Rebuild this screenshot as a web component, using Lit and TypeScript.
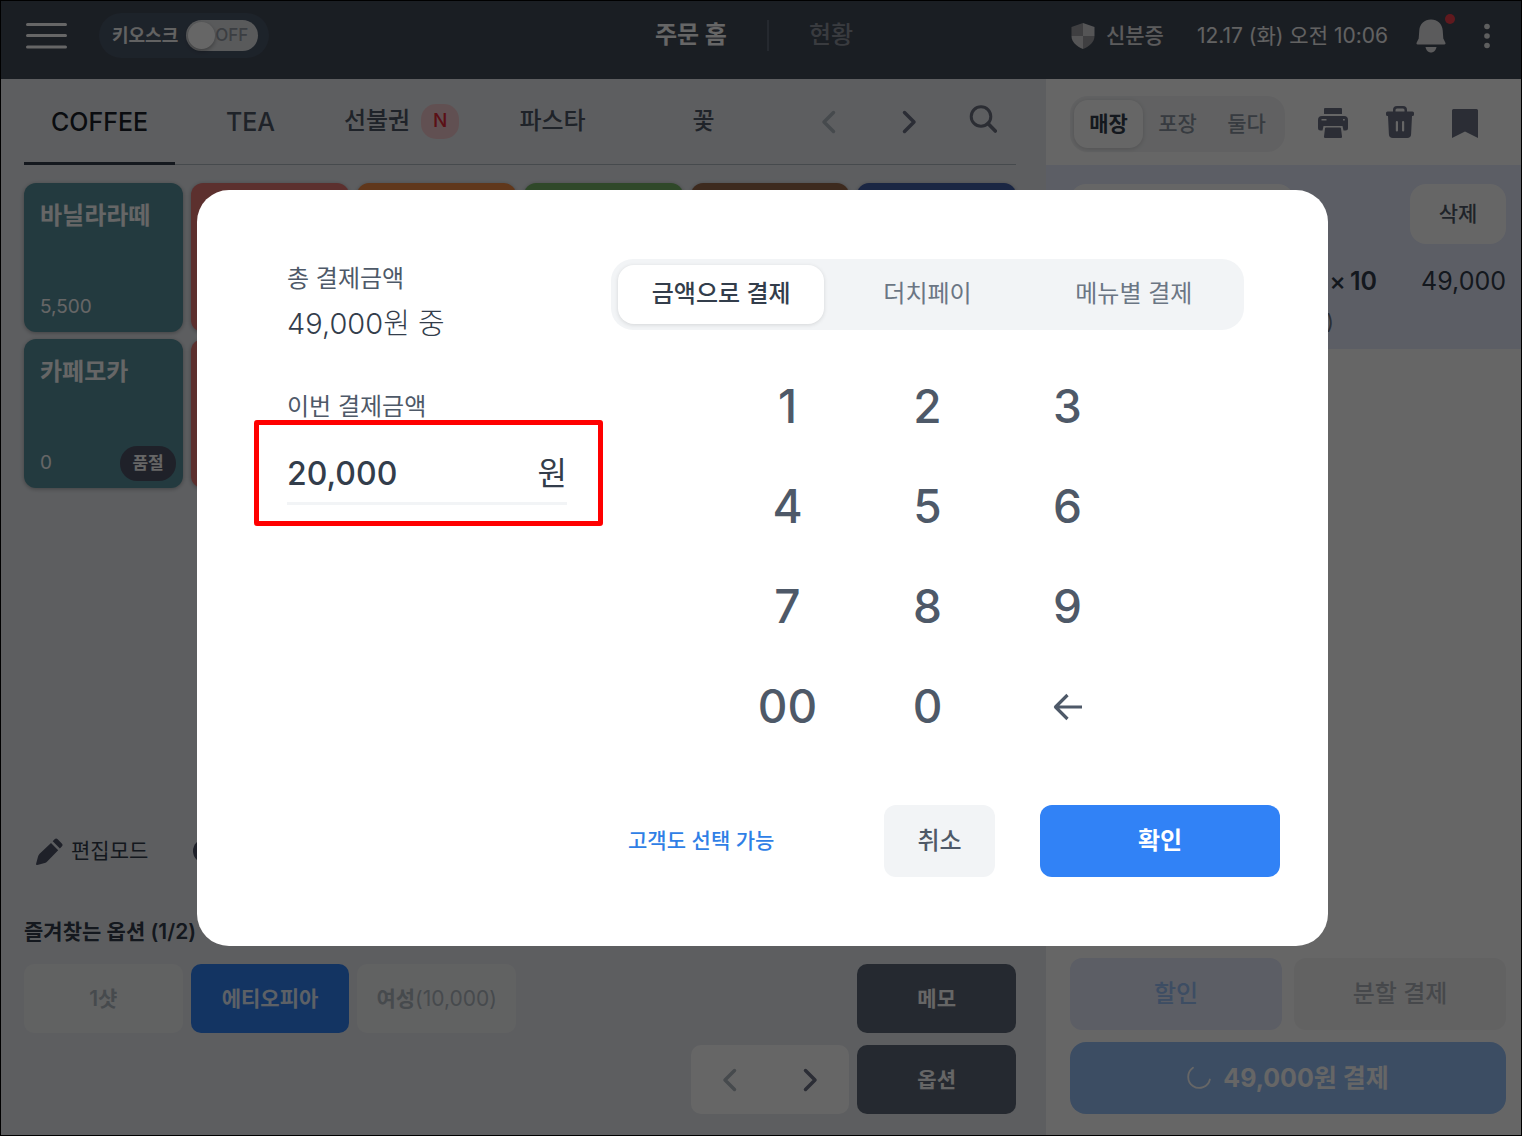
import { LitElement, html, css, svg } from "lit";
import { customElement, state } from "lit/decorators.js";
import { classMap } from "lit/directives/class-map.js";

const chevron = (dir: "left" | "right") => html`
  <svg class="chevron" viewBox="0 0 24 24" width="24" height="24" aria-hidden="true">
    ${dir === "left"
      ? svg`<path d="M16.5 2.5 7 12l9.5 9.5" />`
      : svg`<path d="M7.5 2.5 17 12l-9.5 9.5" />`}
  </svg>
`;

const menuIcon = html`
  <svg viewBox="0 0 41 28" width="41" height="28" aria-hidden="true">
    <path d="M1.5 2.5h38M1.5 13.5h38M1.5 25h38" stroke="#fff" stroke-width="3" stroke-linecap="round" />
  </svg>
`;

const shieldIcon = html`
  <svg viewBox="0 0 24 26" width="24" height="26" aria-hidden="true">
    <path d="M12 0 .5 4v9H12z" fill="#9d9fa4" />
    <path d="M12 0l11.5 4v9H12z" fill="#d4d5d8" />
    <path d="M.5 13H12v13C5.500 23.5.5 19 .5 13z" fill="#d4d5d8" />
    <path d="M23.5 13H12v13c6.500-2.500 11.500-7 11.500-13z" fill="#9d9fa4" />
  </svg>
`;

const bellIcon = html`
  <svg viewBox="0 0 30 34" width="30" height="34" aria-hidden="true">
    <path
      d="M15 .5C8.500 .5 3.800 5 3.300 11.300L2.700 19.500 .6 23.800c-.4 .9 .1 1.700 1 1.700h26.800c.9 0 1.400-.8 1-1.700l-2.100-4.300-.6-8.200C26.200 5 21.500 .5 15 .5z"
      fill="#e3e4e6"
    />
    <path d="M9.500 28h11c-.6 3.300-2.800 5.500-5.500 5.500S10.100 31.300 9.500 28z" fill="#e3e4e6" />
  </svg>
`;

const kebabIcon = html`
  <svg viewBox="0 0 6 26" width="6" height="26" aria-hidden="true">
    <g fill="#eceded"><circle cx="3" cy="3.5" r="2.8" /><circle cx="3" cy="13" r="2.8" /><circle cx="3" cy="22.5" r="2.8" /></g>
  </svg>
`;

const searchIcon = html`
  <svg viewBox="0 0 28 28" width="28" height="28" aria-hidden="true" fill="none" stroke="#6b7080" stroke-width="3">
    <circle cx="12" cy="11.5" r="9.8" />
    <path d="M19 18.500l7.300 7.500" stroke-width="3.600" stroke-linecap="round" />
  </svg>
`;

const printerIcon = html`
  <svg viewBox="0 0 30 30" width="30" height="30" aria-hidden="true" fill="#6b7084">
    <path d="M7 0h16a1 1 0 0 1 1 1v5H6V1a1 1 0 0 1 1-1z" />
    <path
      fill-rule="evenodd"
      d="M4 8h22a4 4 0 0 1 4 4v8a2.500 2.500 0 0 1-2.500 2.500H25.500L24.500 18H5.500L4.500 22.500H2.500A2.500 2.500 0 0 1 0 20v-8a4 4 0 0 1 4-4zM3.500 11v1.600h5V11zM25 11v1.600h1.800V11z"
    />
    <path d="M8 19.500h14a1 1 0 0 1 1 .9l1 8.100a1.300 1.300 0 0 1-1.300 1.500H7.300A1.300 1.300 0 0 1 6 28.500l1-8.100a1 1 0 0 1 1-.9z" />
  </svg>
`;

const trashIcon = html`
  <svg viewBox="0 0 28 32" width="28" height="32" aria-hidden="true" fill="#6b7084">
    <path
      fill-rule="evenodd"
      d="M11 0h6a4 4 0 0 1 4 4v1.500h5.500A1.500 1.500 0 0 1 28 7v1.500a1.500 1.500 0 0 1-1.500 1.500H26l-.9 18.200a4 4 0 0 1-4 3.800H6.900a4 4 0 0 1-4-3.800L2 10h-.5A1.500 1.500 0 0 1 0 8.500V7a1.500 1.500 0 0 1 1.500-1.500H7V4a4 4 0 0 1 4-4zM11 2.500A1.500 1.500 0 0 0 9.500 4v1.500h9V4A1.500 1.500 0 0 0 17 2.500zM9.800 16v8.500a1.100 1.100 0 0 0 2.200 0V16a1.100 1.100 0 0 0-2.200 0zM16 16v8.500a1.100 1.100 0 0 0 2.200 0V16a1.100 1.100 0 0 0-2.200 0z"
    />
  </svg>
`;

const bookmarkIcon = html`
  <svg viewBox="0 0 26 29" width="26" height="29" aria-hidden="true">
    <path d="M1.500 0h23A1.500 1.500 0 0 1 26 1.500V29l-13-6.500L0 29V1.500A1.500 1.500 0 0 1 1.500 0z" fill="#6b7084" />
  </svg>
`;

const pencilIcon = html`
  <svg viewBox="0 0 27 27" width="27" height="27" aria-hidden="true" fill="#4e5468">
    <path d="M18.600 1.200a2.200 2.200 0 0 1 3.100 0l4.100 4.200a2.200 2.200 0 0 1 0 3.100l-1.900 2-7.200-7.300z" />
    <path d="M15 5l7.200 7.300L11.200 23.400a6 6 0 0 1-2.400 1.500L1.300 26.900a1 1 0 0 1-1.200-1.200l2-7.500a6 6 0 0 1 1.500-2.500z" />
  </svg>
`;

const spinnerIcon = html`
  <svg viewBox="0 0 24 24" width="24" height="24" aria-hidden="true">
    <path d="M6 1.800A11 11 0 1 0 22.900 13.500" fill="none" stroke="#fff" stroke-width="1.800" stroke-linecap="round" />
  </svg>
`;

const backIcon = html`
  <svg viewBox="0 0 30 28" width="30" height="28" aria-hidden="true">
    <path d="M29 14H3M14.500 2 2.500 14l12 12" fill="none" stroke="#4e5968" stroke-width="3.200" stroke-linejoin="round" />
  </svg>
`;

interface Product {
  tone: string;
  name?: string;
  price?: string;
  soldOut?: boolean;
}

const PRODUCTS: Product[] = [
  { tone: "teal", name: "바닐라라떼", price: "5,500" },
  { tone: "red" },
  { tone: "orange" },
  { tone: "green" },
  { tone: "brown" },
  { tone: "blue" },
  { tone: "teal", name: "카페모카", price: "0", soldOut: true },
  { tone: "red" },
];

const base = css`
  :host {
    display: block;
    font-family: Inter, "Noto Sans CJK KR", sans-serif;
    line-height: 1.2;
  }
  * {
    box-sizing: border-box;
  }
  button,
  input {
    font: inherit;
    color: inherit;
    border: 0;
    padding: 0;
    margin: 0;
    background: none;
  }
  svg {
    display: block;
    flex: none;
  }
  h2,
  p {
    margin: 0;
    font-weight: inherit;
  }
`;

@customElement("top-bar")
class TopBar extends LitElement {
  static styles = [
    base,
    css`
      .bar {
        display: grid;
        grid-template-columns: 1fr auto 1fr;
        align-items: center;
        height: 78px;
        padding: 0 31px 9px 25px;
        background: #434b58;
        color: #f4f4f5;
      }
      .side {
        display: flex;
        align-items: center;
      }
      .end {
        justify-content: flex-end;
      }
      .kiosk {
        display: flex;
        align-items: center;
        gap: 8px;
        height: 45px;
        margin-left: 32px;
        padding: 0 11px 0 13px;
        border-radius: 24px;
        background: #4a5769;
        font-size: 18px;
        font-weight: 700;
      }
      .track {
        position: relative;
        display: flex;
        align-items: center;
        justify-content: flex-end;
        width: 72px;
        height: 31px;
        padding-right: 10px;
        color: #959ba5;
        font-size: 17px;
        font-weight: 500;
      }
      .track input {
        position: absolute;
        inset: 0;
        appearance: none;
        border-radius: 16px;
        background: #dfe1e4;
      }
      .track input::before {
        content: "";
        display: block;
        width: 27px;
        height: 27px;
        margin: 2px;
        border-radius: 50%;
        background: #fff;
        box-shadow: 0 2px 4px rgba(0, 0, 0, 0.3);
      }
      .off {
        position: relative;
        pointer-events: none;
      }
      nav {
        display: flex;
        align-items: center;
        gap: 40px;
        margin-right: 8px;
        font-size: 24px;
      }
      nav a {
        color: #8f959f;
        text-decoration: none;
        font-weight: 500;
      }
      nav a.current {
        color: #fff;
        font-weight: 700;
      }
      .divider {
        width: 2px;
        height: 31px;
        background: #5d6675;
      }
      .id-check {
        display: flex;
        align-items: center;
        gap: 11px;
        color: #e3e4e6;
        font-size: 21px;
        font-weight: 500;
      }
      time {
        margin-left: 33px;
        font-size: 21px;
      }
      .bell {
        position: relative;
        margin-left: 28px;
      }
      .dot {
        position: absolute;
        top: -5px;
        right: -9px;
        width: 10px;
        height: 10px;
        border-radius: 50%;
        background: #f0404b;
      }
      .more {
        margin-left: 38px;
      }
    `,
  ];

  render() {
    return html`
      <header class="bar">
        <div class="side">
          <button aria-label="메뉴">${menuIcon}</button>
          <label class="kiosk">
            <span>키오스크</span>
            <span class="track">
              <input type="checkbox" role="switch" />
              <span class="off">OFF</span>
            </span>
          </label>
        </div>
        <nav>
          <a class="current" href="#home">주문 홈</a>
          <span class="divider"></span>
          <a href="#status">현황</a>
        </nav>
        <div class="side end">
          <button class="id-check">${shieldIcon}<span>신분증</span></button>
          <time>12.17 (화) 오전 10:06</time>
          <button class="bell" aria-label="알림">${bellIcon}<span class="dot"></span></button>
          <button class="more" aria-label="더보기">${kebabIcon}</button>
        </div>
      </header>
    `;
  }
}

@customElement("menu-board")
class MenuBoard extends LitElement {
  static styles = [
    base,
    css`
      :host {
        display: flex;
        flex-direction: column;
        padding: 0 30px 21px 23px;
        background: #e8ebf0;
      }
      .categories {
        display: flex;
        height: 86px;
        border-bottom: 1px solid #b0b8c1;
        font-size: 24px;
        font-weight: 500;
        color: #4e5968;
      }
      .tabs {
        flex: 1;
        display: grid;
        grid-template-columns: repeat(5, 1fr);
        margin-right: 10px;
      }
      .tab {
        display: flex;
        align-items: center;
        justify-content: center;
        gap: 11px;
        padding-top: 2px;
        margin-bottom: -1px;
        border-bottom: 3px solid transparent;
      }
      .tab.latin {
        font-size: 25px;
      }
      .tab.current {
        color: #191f28;
        border-color: #333d4b;
      }
      .new {
        display: grid;
        place-items: center;
        width: 38px;
        height: 35px;
        border-radius: 15px;
        background: #f3c9cd;
        color: #e42939;
        font-size: 19px;
      }
      .tool {
        display: grid;
        place-items: center;
        width: 80px;
      }
      .search {
        width: 67px;
        padding-bottom: 5px;
      }
      .chevron {
        fill: none;
        stroke: #6b7084;
        stroke-width: 3.5;
        stroke-linecap: round;
        stroke-linejoin: round;
      }
      .dim .chevron {
        stroke: #b0b8c1;
      }
      .products {
        display: grid;
        grid-template-columns: repeat(6, 1fr);
        grid-auto-rows: 149px;
        gap: 7px 8px;
        margin-top: 18px;
      }
      .product {
        display: flex;
        flex-direction: column;
        justify-content: space-between;
        padding: 15px 7px 7px 16px;
        border-radius: 12px;
        color: #fff;
        text-align: left;
        box-shadow: 0 1px 4px rgba(0, 0, 0, 0.3);
      }
      .teal { background: #57929f; }
      .red { background: #e67874; }
      .orange { background: #f08a45; }
      .green { background: #76b468; }
      .brown { background: #9a6a4c; }
      .blue { background: #425fa8; }
      .name {
        font-size: 24px;
        line-height: 36px;
        font-weight: 700;
      }
      .foot {
        display: flex;
        align-items: center;
        justify-content: space-between;
        height: 35px;
        font-size: 19px;
      }
      .sold-out {
        padding: 0 12px;
        border-radius: 17px;
        background: #4e5468;
        font-size: 17px;
        line-height: 35px;
        font-weight: 700;
      }
      .actions {
        display: flex;
        align-items: center;
        gap: 45px;
        height: 32px;
        margin-top: auto;
        padding-left: 12px;
        color: #333d4b;
        font-size: 21px;
      }
      .action {
        display: flex;
        align-items: center;
        gap: 8px;
      }
      h2 {
        margin: 49px 0 16px;
        font-size: 21px;
        line-height: 32px;
        font-weight: 600;
        color: #333d4b;
      }
      .options {
        display: grid;
        grid-template-columns: repeat(6, 1fr);
        grid-auto-rows: 69px;
        gap: 12px 8px;
        font-size: 21px;
        font-weight: 600;
      }
      .option,
      .pager {
        border-radius: 10px;
        background: #fff;
        color: #b0b8c1;
      }
      .option.faint {
        background: #f3f4f6;
      }
      .option.chosen {
        background: #3182f6;
        color: #e8f3ff;
      }
      .option.dark {
        grid-column: 6;
        background: #5d6878;
        color: #fff;
      }
      .option small {
        font-size: 21px;
        font-weight: 400;
      }
      .pager {
        grid-column: 5;
        display: grid;
        grid-template-columns: 1fr 1fr;
      }
      .pager button {
        display: grid;
        place-items: center;
      }
    `,
  ];

  render() {
    return html`
      <div class="categories">
        <div class="tabs" role="tablist">
          <button class="tab latin current" role="tab" aria-selected="true">COFFEE</button>
          <button class="tab latin" role="tab">TEA</button>
          <button class="tab" role="tab">선불권<span class="new">N</span></button>
          <button class="tab" role="tab">파스타</button>
          <button class="tab" role="tab">꽃</button>
        </div>
        <button class="tool dim" aria-label="이전">${chevron("left")}</button>
        <button class="tool" aria-label="다음">${chevron("right")}</button>
        <button class="tool search" aria-label="검색">${searchIcon}</button>
      </div>
      <div class="products">
        ${PRODUCTS.map(
          (p) => html`
            <button class="product ${p.tone}">
              ${p.name
                ? html`<span class="name">${p.name}</span>
                    <span class="foot">
                      <span>${p.price}</span>
                      ${p.soldOut ? html`<span class="sold-out">품절</span>` : null}
                    </span>`
                : null}
            </button>
          `,
        )}
      </div>
      <div class="actions">
        <button class="action">${pencilIcon}편집모드</button>
        <svg viewBox="0 0 24 24" width="24" height="24" aria-hidden="true">
          <circle cx="12" cy="12" r="12" fill="#4e5468" />
        </svg>
      </div>
      <h2>즐겨찾는 옵션 (1/2)</h2>
      <div class="options">
        <button class="option faint">1샷</button>
        <button class="option chosen">에티오피아</button>
        <button class="option faint">여성<small>(10,000)</small></button>
        <button class="option dark">메모</button>
        <div class="pager">
          <button class="dim" aria-label="이전 옵션">${chevron("left")}</button>
          <button aria-label="다음 옵션">${chevron("right")}</button>
        </div>
        <button class="option dark">옵션</button>
      </div>
    `;
  }
}

@customElement("order-panel")
class OrderPanel extends LitElement {
  static styles = [
    base,
    css`
      :host {
        display: flex;
        flex-direction: column;
        background: #fff;
      }
      .tools {
        display: flex;
        align-items: center;
        justify-content: space-between;
        height: 86px;
        padding: 4px 43px 0 24px;
      }
      .places {
        display: grid;
        grid-template-columns: repeat(3, 69px);
        height: 56px;
        padding: 4px;
        border-radius: 18px;
        background: #f2f3f5;
        color: #8b95a1;
        font-size: 21px;
        font-weight: 500;
      }
      .places .current {
        border-radius: 14px;
        background: #fff;
        color: #333d4b;
        font-weight: 600;
        box-shadow: 0 1px 5px rgba(0, 0, 0, 0.16);
      }
      .icons {
        display: flex;
        align-items: flex-end;
        gap: 38px;
        padding-bottom: 5px;
      }
      .item {
        display: flex;
        flex-direction: column;
        height: 184px;
        padding: 19px 15px 0 24px;
        background: #e6ebfc;
        color: #333d4b;
      }
      .item-head {
        display: flex;
        justify-content: space-between;
      }
      .blank,
      .remove {
        width: 96px;
        height: 60px;
        border-radius: 16px;
        background: #fff;
        color: #4e5968;
        font-size: 21px;
        font-weight: 500;
      }
      .blank {
        width: 224px;
      }
      .line {
        display: flex;
        justify-content: flex-end;
        margin-top: 19px;
        font-size: 25px;
        line-height: 36px;
      }
      .count {
        display: flex;
        gap: 4px;
        margin-right: 44px;
        font-weight: 500;
      }
      .count strong {
        font-weight: 600;
      }
      .note {
        margin-right: 172px;
        margin-top: 7px;
        text-align: right;
        font-size: 21px;
        line-height: 32px;
        color: #6b7684;
      }
      .pay {
        display: grid;
        grid-template-columns: 1fr 1fr;
        gap: 12px;
        margin-top: auto;
        padding: 0 15px 21px 24px;
        font-size: 24px;
      }
      .pay button {
        height: 72px;
        border-radius: 12px;
        font-weight: 500;
      }
      .discount {
        background: #e6ebfc;
        color: #98c0f8;
      }
      .split {
        background: #f5f5f6;
        color: #b0b5bc;
      }
      .pay .total {
        grid-column: 1 / -1;
        display: flex;
        align-items: center;
        justify-content: center;
        gap: 12px;
        border-radius: 16px;
        background: #97c0f8;
        color: #fff;
        font-size: 25px;
        font-weight: 700;
      }
    `,
  ];

  render() {
    return html`
      <div class="tools">
        <div class="places">
          <button class="current">매장</button>
          <button>포장</button>
          <button>둘다</button>
        </div>
        <div class="icons">
          <button aria-label="인쇄">${printerIcon}</button>
          <button aria-label="전체 삭제">${trashIcon}</button>
          <button aria-label="저장">${bookmarkIcon}</button>
        </div>
      </div>
      <div class="item">
        <div class="item-head">
          <span class="blank"></span>
          <button class="remove">삭제</button>
        </div>
        <p class="line">
          <span class="count"><span>×</span><strong>10</strong></span>
          <span>49,000</span>
        </p>
        <p class="note">)</p>
      </div>
      <div class="pay">
        <button class="discount">할인</button>
        <button class="split">분할 결제</button>
        <button class="total">${spinnerIcon}49,000원 결제</button>
      </div>
    `;
  }
}

@customElement("payment-dialog")
class PaymentDialog extends LitElement {
  static styles = [
    base,
    css`
      .dialog {
        display: flex;
        gap: 44px;
        padding: 69px 48px 69px 90px;
        border-radius: 32px;
        background: #fff;
        color: #4e5968;
      }
      .summary {
        flex: 0 1 280px;
        min-width: 0;
        padding-top: 4px;
        font-size: 24px;
        line-height: 32px;
      }
      .sum {
        margin: 9px 0 47px;
        color: #333d4b;
        font-size: 29px;
        line-height: 40px;
        font-weight: 300;
      }
      .amount {
        position: relative;
        display: flex;
        align-items: center;
        height: 60px;
        margin-top: 22px;
        border-bottom: 3px solid #f2f4f6;
        color: #333d4b;
        font-size: 32px;
        font-weight: 500;
      }
      .amount input {
        flex: 1;
        min-width: 0;
        outline: none;
      }
      .unit {
        font-weight: 400;
      }
      .highlight {
        position: absolute;
        inset: -25px -36px -24px -33px;
        border: 5px solid #f00;
        border-radius: 3px;
        pointer-events: none;
      }
      .entry {
        flex: 1;
        min-width: 0;
      }
      .modes {
        display: grid;
        grid-template-columns: repeat(3, 1fr);
        height: 71px;
        margin-right: 36px;
        padding: 6px 7px;
        border-radius: 22px;
        background: #f2f4f6;
        color: #6b7684;
        font-size: 24px;
      }
      .mode.current {
        border-radius: 16px;
        background: #fff;
        color: #333d4b;
        font-weight: 500;
        box-shadow: 0 1px 4px rgba(0, 0, 0, 0.12);
      }
      .keys {
        display: grid;
        grid-template-columns: repeat(3, 140px);
        grid-auto-rows: 100px;
        justify-content: center;
        margin: 27px 36px 48px 0;
        font-size: 46px;
        font-weight: 500;
      }
      .keys button {
        display: grid;
        place-items: center;
      }
      .footer {
        display: flex;
        align-items: center;
        gap: 45px;
        padding-left: 17px;
        font-size: 24px;
      }
      .footer a {
        margin-right: auto;
        color: #2f7fe6;
        font-size: 21px;
        font-weight: 500;
        text-decoration: none;
      }
      .cancel,
      .confirm {
        height: 72px;
        border-radius: 12px;
        font-weight: 500;
      }
      .cancel {
        width: 111px;
        background: #f2f4f6;
      }
      .confirm {
        width: 240px;
        background: #3182f6;
        color: #fff;
        font-weight: 700;
      }
    `,
  ];

  @state() private amount = 20000;
  @state() private mode = 0;

  private press(key: string) {
    this.amount = Number(`${this.amount}${key}`);
  }

  render() {
    const modes = ["금액으로 결제", "더치페이", "메뉴별 결제"];
    const keys = ["1", "2", "3", "4", "5", "6", "7", "8", "9", "00", "0"];
    return html`
      <section class="dialog" role="dialog" aria-modal="true">
        <div class="summary">
          <p>총 결제금액</p>
          <p class="sum">49,000원 중</p>
          <label for="amount">이번 결제금액</label>
          <div class="amount">
            <input id="amount" inputmode="numeric" .value=${this.amount.toLocaleString("en-US")} />
            <span class="unit">원</span>
            <span class="highlight"></span>
          </div>
        </div>
        <div class="entry">
          <div class="modes" role="tablist">
            ${modes.map(
              (label, i) => html`
                <button
                  class=${classMap({ mode: true, current: i === this.mode })}
                  role="tab"
                  @click=${() => (this.mode = i)}
                >${label}</button>
              `,
            )}
          </div>
          <div class="keys">
            ${keys.map((k) => html`<button @click=${() => this.press(k)}>${k}</button>`)}
            <button aria-label="지우기" @click=${() => (this.amount = Math.floor(this.amount / 10))}>
              ${backIcon}
            </button>
          </div>
          <div class="footer">
            <a href="#customer">고객도 선택 가능</a>
            <button class="cancel">취소</button>
            <button class="confirm">확인</button>
          </div>
        </div>
      </section>
    `;
  }
}

@customElement("app-root")
class AppRoot extends LitElement {
  static styles = [
    base,
    css`
      .screen {
        position: relative;
        display: flex;
        flex-direction: column;
        min-height: 100vh;
        border: 1px solid #000;
      }
      .body {
        flex: 1;
        display: grid;
        grid-template-columns: 2.2fr 1fr;
      }
      .overlay {
        position: absolute;
        inset: 0;
        display: grid;
        place-items: center;
        padding-left: 3px;
        background: rgba(0, 0, 0, 0.6);
      }
      payment-dialog {
        width: min(1131px, 96%);
      }
    `,
  ];

  render() {
    return html`
      <div class="screen">
        <top-bar></top-bar>
        <main class="body">
          <menu-board></menu-board>
          <order-panel></order-panel>
        </main>
        <div class="overlay"><payment-dialog></payment-dialog></div>
      </div>
    `;
  }
}
